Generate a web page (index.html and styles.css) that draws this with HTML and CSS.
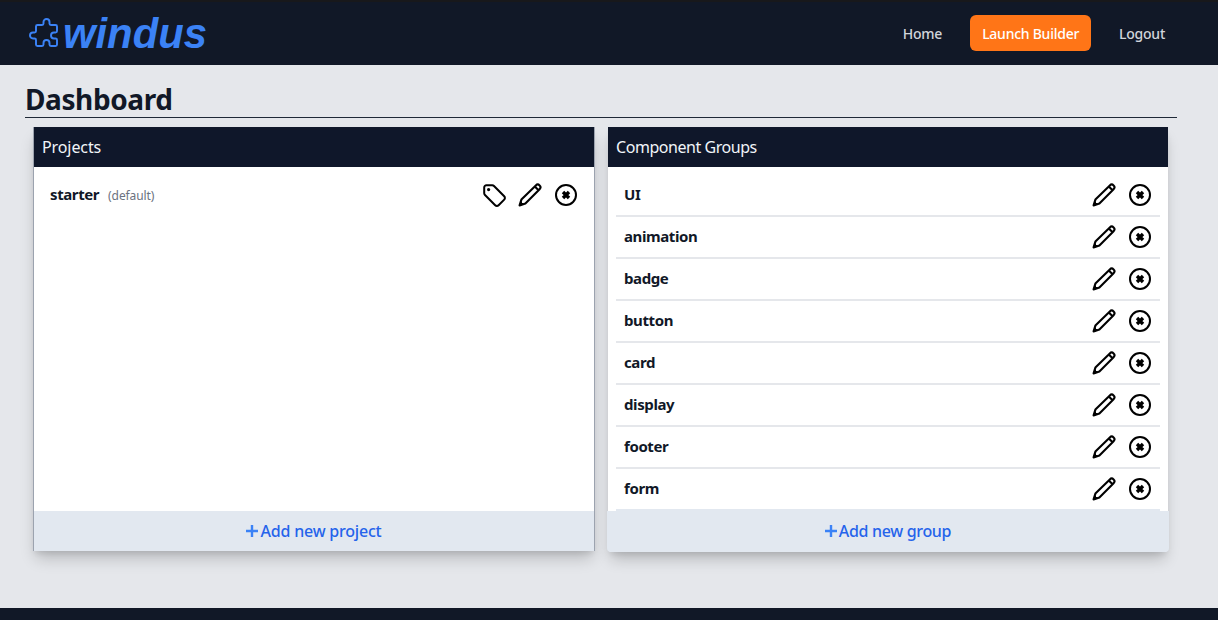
FILE: index.html
```html
<!DOCTYPE html>
<html lang="en">
<head>
<meta charset="utf-8">
<title>Windus Dashboard</title>
<link rel="stylesheet" href="styles.css">
</head>
<body>
<svg class="sprite" width="0" height="0" aria-hidden="true">
  <symbol id="i-tag" viewBox="0 0 24 24"><path d="M2.2 4.4 A2.2 2.2 0 0 1 4.4 2.2 L10.2 2.2 A2.6 2.6 0 0 1 12 3 L22.2 13.2 A2.4 2.4 0 0 1 22.2 16.6 L16.6 22.2 A2.4 2.4 0 0 1 13.2 22.2 L3 12 A2.6 2.6 0 0 1 2.2 10.2 Z" fill="none" stroke="currentColor" stroke-width="2" stroke-linejoin="round"/><circle cx="6.6" cy="6.6" r="1.6" fill="currentColor"/></symbol>
  <symbol id="i-pencil" viewBox="0 0 24 24"><path d="M1.6 22.4 L3.4 16.6 L17.8 2.4 A2.6 2.6 0 0 1 21.6 6.2 L7.4 20.6 Z M16.8 3.4 L20.6 7.2" fill="none" stroke="currentColor" stroke-width="2.1" stroke-linejoin="round" stroke-linecap="round"/><path d="M1.6 22.4 L2.8 18.8 L5.2 21.2 Z" fill="currentColor" stroke="currentColor" stroke-linejoin="round"/></symbol>
  <symbol id="i-x" viewBox="0 0 24 24"><circle cx="12" cy="12" r="10" fill="none" stroke="currentColor" stroke-width="2"/><path d="M9 9 L15 15 M15 9 L9 15" fill="none" stroke="currentColor" stroke-width="3.4"/></symbol>
  <symbol id="i-plus" viewBox="0 0 12 12"><path d="M6 0 V12 M0 6 H12" fill="none" stroke="currentColor" stroke-width="2.4"/></symbol>
</svg>

<header class="topbar">
  <a class="brand">
    <svg class="brand-icon" viewBox="0 0 24 24"><path d="M11 4a2 2 0 114 0v1a1 1 0 001 1h3a1 1 0 011 1v3a1 1 0 01-1 1h-1a2 2 0 100 4h1a1 1 0 011 1v3a1 1 0 01-1 1h-3a1 1 0 01-1-1v-1a2 2 0 10-4 0v1a1 1 0 01-1 1H7a1 1 0 01-1-1v-3a1 1 0 00-1-1H4a2 2 0 110-4h1a1 1 0 001-1V7a1 1 0 011-1h3a1 1 0 001-1V4z" fill="none" stroke="currentColor" stroke-width="1.3" stroke-linejoin="round"/></svg>
    <span class="brand-name">windus</span>
  </a>
  <nav class="nav">
    <a class="nav-link">Home</a>
    <a class="nav-cta">Launch Builder</a>
    <a class="nav-link">Logout</a>
  </nav>
</header>

<main class="main">
  <h1 class="title">Dashboard</h1>
  <div class="panels">
    <section class="card card-projects">
      <h2 class="card-head">Projects</h2>
      <div class="card-body">
        <div class="row row-plain">
          <span class="row-name">starter</span><span class="row-note">(default)</span>
          <span class="row-actions">
            <svg class="icon"><use href="#i-tag"/></svg>
            <svg class="icon"><use href="#i-pencil"/></svg>
            <svg class="icon"><use href="#i-x"/></svg>
          </span>
        </div>
      </div>
      <a class="card-foot"><svg class="plus"><use href="#i-plus"/></svg>Add new project</a>
    </section>

    <section class="card card-groups">
      <h2 class="card-head">Component Groups</h2>
      <ul class="list">
        <li class="row"><span class="row-name">UI</span><span class="row-actions"><svg class="icon"><use href="#i-pencil"/></svg><svg class="icon"><use href="#i-x"/></svg></span></li>
        <li class="row"><span class="row-name">animation</span><span class="row-actions"><svg class="icon"><use href="#i-pencil"/></svg><svg class="icon"><use href="#i-x"/></svg></span></li>
        <li class="row"><span class="row-name">badge</span><span class="row-actions"><svg class="icon"><use href="#i-pencil"/></svg><svg class="icon"><use href="#i-x"/></svg></span></li>
        <li class="row"><span class="row-name">button</span><span class="row-actions"><svg class="icon"><use href="#i-pencil"/></svg><svg class="icon"><use href="#i-x"/></svg></span></li>
        <li class="row"><span class="row-name">card</span><span class="row-actions"><svg class="icon"><use href="#i-pencil"/></svg><svg class="icon"><use href="#i-x"/></svg></span></li>
        <li class="row"><span class="row-name">display</span><span class="row-actions"><svg class="icon"><use href="#i-pencil"/></svg><svg class="icon"><use href="#i-x"/></svg></span></li>
        <li class="row"><span class="row-name">footer</span><span class="row-actions"><svg class="icon"><use href="#i-pencil"/></svg><svg class="icon"><use href="#i-x"/></svg></span></li>
        <li class="row"><span class="row-name">form</span><span class="row-actions"><svg class="icon"><use href="#i-pencil"/></svg><svg class="icon"><use href="#i-x"/></svg></span></li>
      </ul>
      <a class="card-foot"><svg class="plus"><use href="#i-plus"/></svg>Add new group</a>
    </section>
  </div>
</main>

<footer class="bottombar"></footer>
</body>
</html>
```

FILE: styles.css
```css
* { box-sizing: border-box; }
html, body { margin: 0; height: 100%; }
body {
  display: flex;
  flex-direction: column;
  height: 100vh;
  overflow: hidden;
  background: #e5e7eb;
  color: #111827;
  font-family: "Noto Sans", "Open Sans", sans-serif;
  font-size: 16px;
}
.sprite { position: absolute; }

.topbar {
  flex: 0 0 65px;
  display: flex;
  align-items: center;
  justify-content: space-between;
  padding: 0 49px 1px 30px;
  background: #111827;
  border-top: 2px solid #18181b;
}
.brand { display: flex; align-items: center; padding-top: 2px; color: #3b82f6; }
.brand-icon { width: 36px; height: 36px; margin-left: -3px; margin-right: 0; }
.brand-name {
  font-family: "Liberation Sans", Arial, sans-serif;
  font-weight: 700;
  font-style: italic;
  font-size: 41.8px;
  line-height: 44px;
}
.nav { display: flex; align-items: center; gap: 24px; font-size: 14px; font-weight: 500; letter-spacing: -0.25px; }
.nav-link { color: #d1d5db; margin: 0 4px; }
.nav-cta {
  background: #ff7517;
  color: #fff;
  border-radius: 6px;
  height: 36px;
  line-height: 37px;
  padding: 0 12px;
}

.main { flex: 1 1 auto; padding: 16px 41px 0 25px; }
.title {
  margin: 0;
  font-size: 28px;
  line-height: 36px;
  font-weight: 700;
  letter-spacing: -0.4px;
  border-bottom: 1px solid #1f2937;
}
.panels {
  display: grid;
  grid-template-columns: 562px 560px;
  gap: 13px;
  margin: 9px 0 0 8px;
  align-items: start;
}
.card {
  display: flex;
  flex-direction: column;
  background: #fff;
  box-shadow: 0 10px 15px -3px rgba(0,0,0,.2), 0 4px 6px -2px rgba(0,0,0,.1);
}
.card-projects { height: 424px; border-left: 1px solid #9ca3af; border-right: 1px solid #9ca3af; }
.card-groups { height: 425px; border-radius: 0 0 4px 4px; }
.card-head {
  flex: 0 0 40px;
  margin: 0;
  padding: 0 8px;
  background: #0f172a;
  color: #f1f5f9;
  font-size: 16px;
  font-weight: 400;
  line-height: 40px;
}
.card-projects .card-head { letter-spacing: -0.1px; }
.card-groups .card-head { letter-spacing: -0.45px; }
.card-body { flex: 1 1 auto; padding: 8px 8px 0; }
.list {
  flex: 1 1 auto;
  list-style: none;
  margin: 0;
  padding: 8px 8px 0;
}
.row {
  display: flex;
  align-items: center;
  height: 42px;
  padding: 0 8px;
  border-bottom: 2px solid #e5e7eb;
}
.row-plain { border-bottom: 0; padding-bottom: 2px; }
.list .row:last-child { border-bottom-color: #e2e8f0; }
.row-name { font-weight: 700; font-size: 15px; letter-spacing: -0.4px; padding-bottom: 2px; }
.row-note { margin-left: 9px; padding-top: 1px; font-size: 12px; letter-spacing: -0.1px; color: #6b7280; }
.row-actions { margin-left: auto; display: flex; gap: 12px; }
.icon { display: block; width: 24px; height: 24px; color: #000; }
.card-foot {
  flex: 0 0 40px;
  display: flex;
  align-items: center;
  justify-content: center;
  gap: 2px;
  background: #e2e8f0;
  color: #2563eb;
  font-size: 16px;
  font-weight: 500;
  letter-spacing: -0.2px;
}
.card-groups .card-foot {
  flex-basis: 41px;
  margin: 0 -1px;
  padding-bottom: 1px;
  border-radius: 0 0 4px 4px;
  letter-spacing: -0.33px;
}
.plus { width: 12px; height: 12px; color: #3b82f6; }
.bottombar { flex: 0 0 12px; background: #111827; }
```
